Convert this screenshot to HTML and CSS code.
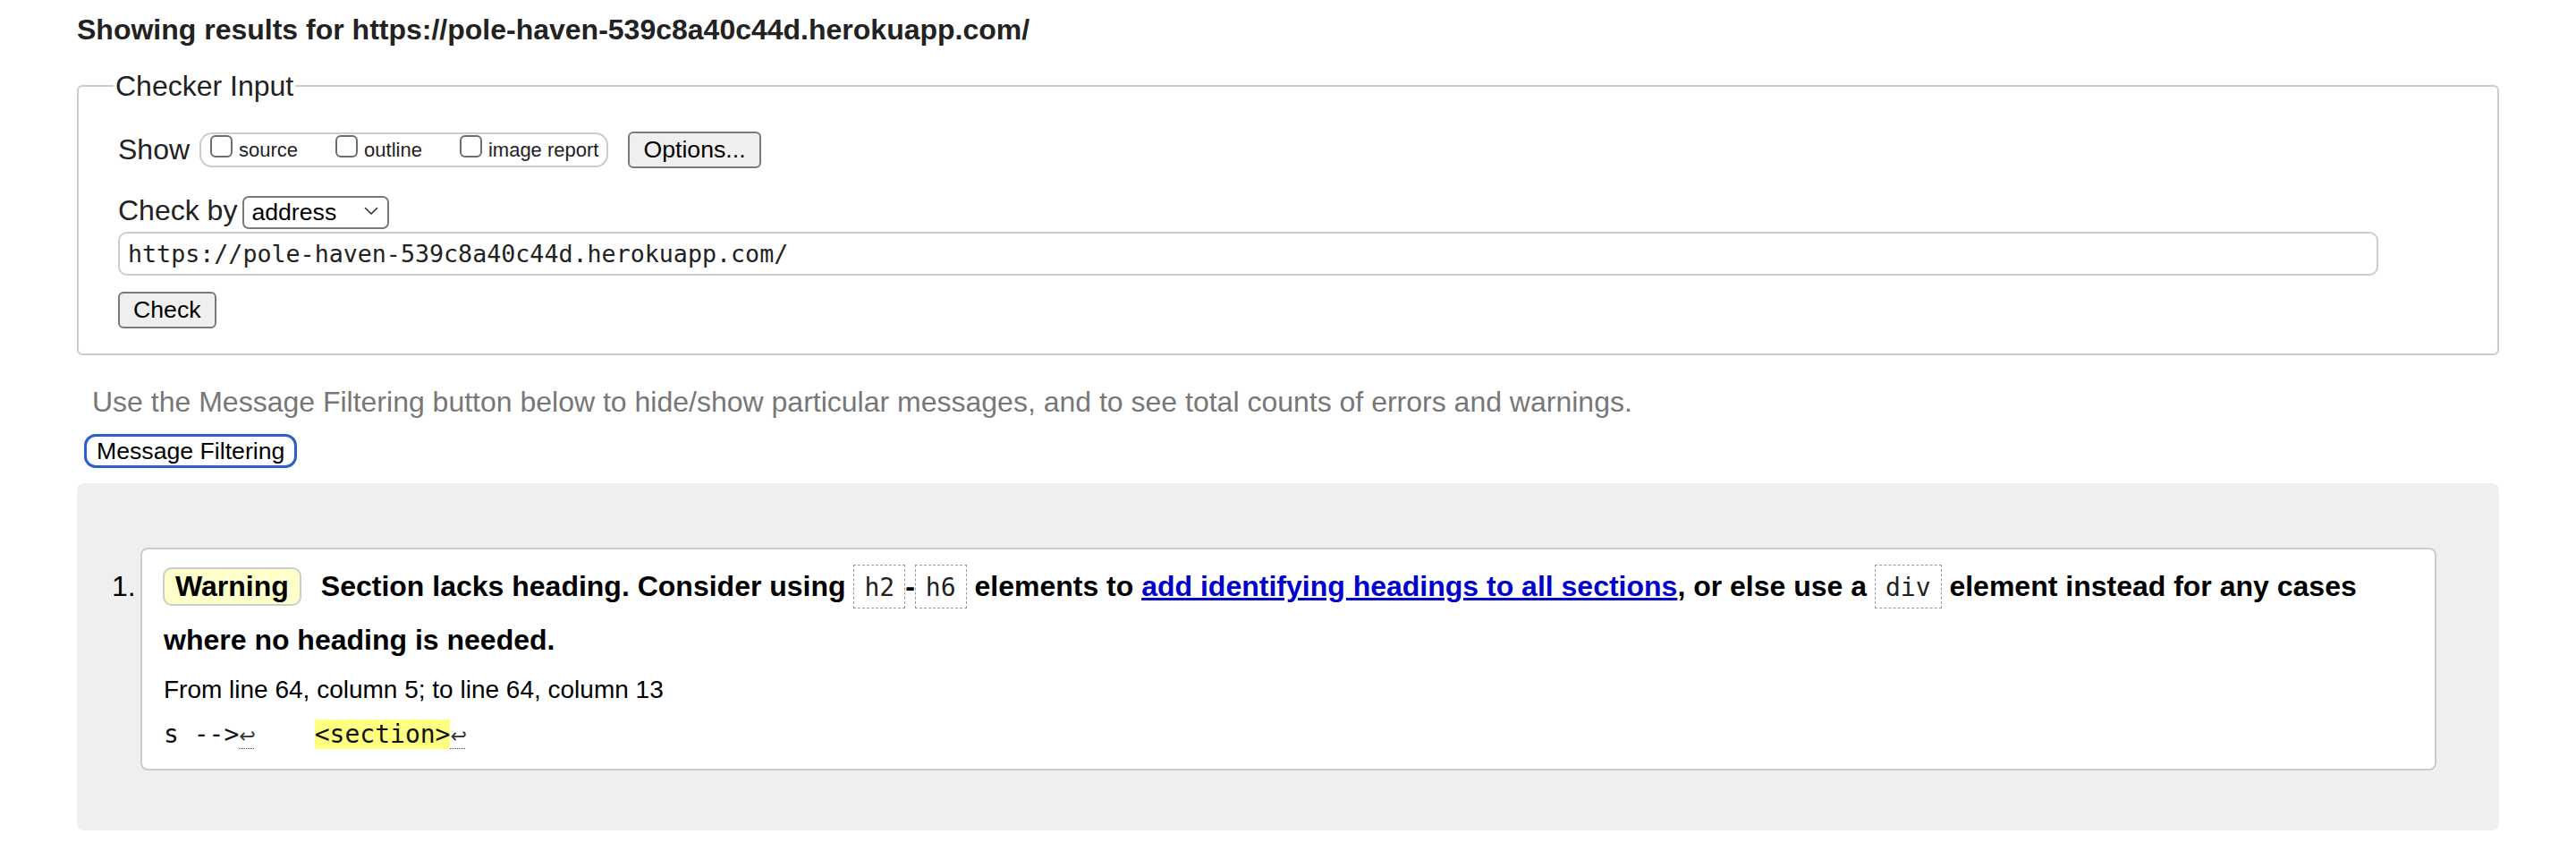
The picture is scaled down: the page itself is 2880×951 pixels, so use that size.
FILE: index.html
```html
<!DOCTYPE html>
<html lang="en">
<head>
<meta charset="utf-8">
<title>Showing results for https://pole-haven-539c8a40c44d.herokuapp.com/ - Nu Html Checker</title>
<link rel="stylesheet" href="styles.css">
</head>
<body>
<h2 class="results-title">Showing results for https://pole-haven-539c8a40c44d.herokuapp.com/</h2>
<form class="checker">
  <fieldset class="checker-input">
    <legend>Checker Input</legend>
    <div class="row row-show">
      <span class="row-label">Show</span>
      <span class="show-group"><label class="opt"><input type="checkbox" class="cb">source</label><label class="opt"><input type="checkbox" class="cb">outline</label><label class="opt"><input type="checkbox" class="cb">image report</label></span>
      <button type="button" class="btn btn-options">Options...</button>
    </div>
    <div class="row row-by">
      <span class="row-label">Check by</span>
      <span class="select-wrap">
        <select class="select"><option>address</option></select>
        <svg class="chev" width="16" height="10" viewBox="0 0 16 10" aria-hidden="true"><path d="M1.5 1.5 L8 8 L14.5 1.5" fill="none" stroke="#333" stroke-width="1.6" stroke-linecap="round" stroke-linejoin="round"/></svg>
      </span>
    </div>
    <input class="url" type="url" value="https://pole-haven-539c8a40c44d.herokuapp.com/">
    <div class="row row-submit"><button type="button" class="btn">Check</button></div>
  </fieldset>
</form>
<p class="filter-note">Use the Message Filtering button below to hide/show particular messages, and to see total counts of errors and warnings.</p>
<button type="button" class="filter-btn">Message Filtering</button>
<div class="results">
  <ol class="messages">
    <li class="card">
      <p class="msg"><strong class="badge">Warning</strong><span class="msg-text">Section lacks heading. Consider using <code>h2</code>-<code>h6</code> elements to <a href="#">add identifying headings to all sections</a>, or else use a <code>div</code> element instead for any cases where no heading is needed.</span></p>
      <p class="location">From line 64, column 5; to line 64, column 13</p>
      <p class="extract"><code>s --&gt;<span class="lf">↩</span>    <mark>&lt;section&gt;</mark><span class="lf">↩</span></code></p>
    </li>
  </ol>
</div>
</body>
</html>
```
FILE: styles.css
```css
* { box-sizing: border-box; }

html { background: #fff; }

body {
  margin: 0;
  padding: 15px 86px 0;
  font-family: "Liberation Sans", Arial, Helvetica, sans-serif;
  font-size: 32px;
  color: #222;
}

.results-title {
  margin: 0 0 25px;
  font-size: 32px;
  line-height: 37px;
  font-weight: bold;
  color: #222;
}

.checker { margin: 0; }

.checker-input {
  margin: 0;
  padding: 32px 0 28px 44px;
  border: 2px solid #ccc;
  border-radius: 6px;
}

.checker-input legend {
  padding: 0 2px;
  margin-left: -5px;
  font-size: 32px;
  line-height: 38px;
}

.row { display: flex; align-items: center; }
.row-show { height: 41px; }
.row-by { height: 37px; margin-top: 29px; }
.row-submit { height: 41px; margin-top: 18px; }

.row-label { font-size: 32px; line-height: 37px; }

.show-group {
  display: inline-block;
  margin-left: 11px;
  height: 39px;
  padding: 1px 9px 0 10px;
  border: 2px solid #ccc;
  border-radius: 14px;
  font-size: 22px;
  line-height: 25px;
  white-space: nowrap;
}

.opt { margin-right: 42px; }
.opt:last-child { margin-right: 0; }

.cb {
  appearance: none;
  -webkit-appearance: none;
  display: inline-block;
  width: 25px;
  height: 25px;
  margin: 0 7px 0 0;
  border: 2px solid #6e6e6e;
  border-radius: 6px;
  background: #fff;
  vertical-align: -1px;
}

.btn {
  height: 41px;
  padding: 0 15px;
  border: 2px solid #7a7a7a;
  border-radius: 6px;
  background: #efefef;
  font-family: "Liberation Sans", Arial, sans-serif;
  font-size: 26.67px;
  color: #000;
}

.btn-options { margin-left: 22px; }

.select-wrap {
  position: relative;
  display: inline-block;
  margin-left: 6px;
  height: 37px;
}

.select {
  appearance: none;
  -webkit-appearance: none;
  width: 164px;
  height: 37px;
  padding: 0 0 0 8px;
  border: 2px solid #7a7a7a;
  border-radius: 7px;
  background: #fff;
  font-family: "Liberation Sans", Arial, sans-serif;
  font-size: 26.67px;
  color: #000;
}

.chev {
  position: absolute;
  right: 12px;
  top: 14px;
  pointer-events: none;
}

.url {
  display: block;
  margin-top: 5px;
  width: 95%;
  height: 49px;
  padding: 0 9px;
  border: 2px solid #ccc;
  border-radius: 10px;
  font-family: "DejaVu Sans Mono", "Liberation Mono", monospace;
  font-size: 26.67px;
  color: #222;
  background: #fff;
}

.filter-note {
  margin: 34px 0 17px 17px;
  font-size: 32px;
  line-height: 37px;
  color: #777;
}

.filter-btn {
  display: block;
  margin-left: 8px;
  height: 38px;
  padding: 0 11px;
  border: 3px solid #2a5fcc;
  border-radius: 13px;
  background: #fff;
  font-family: "Liberation Sans", Arial, sans-serif;
  font-size: 26.67px;
  color: #000;
}

.results {
  margin-top: 17px;
  padding: 72px 70px 67px 0;
  background: #efefef;
  border-radius: 8px;
}

.messages {
  margin: 0;
  padding-left: 71px;
  list-style: decimal outside;
  font-size: 32px;
  color: #000;
}

.card {
  padding: 12px 24px 18px;
  background: #fff;
  border: 2px solid #ccc;
  border-radius: 8px;
}

.card::marker {
  content: counter(list-item) ".\2006";
}

.msg {
  margin: 0;
  font-weight: bold;
  line-height: 58px;
  color: #000;
}

.badge {
  margin: 0 22px 0 -1px;
  padding: 1px 12px 2px;
  border: 2px solid #ccc;
  border-radius: 10px;
  background: #ffffcc;
}

.msg code {
  padding: 8px 11px 6px;
  border: 1px dashed #999;
  font-family: "DejaVu Sans Mono", "Liberation Mono", monospace;
  font-size: 28px;
  font-weight: normal;
  color: #222;
}

.msg a { color: #0000cc; text-decoration: underline; }

.location {
  margin: 7px 0 0;
  font-size: 28px;
  line-height: 40px;
}

.extract {
  margin: 10px 0 0;
  font-size: 28px;
  line-height: 40px;
  white-space: pre;
}

.extract code {
  font-family: "DejaVu Sans Mono", "Liberation Mono", monospace;
  font-size: 28px;
  color: #111;
}

.extract mark {
  background: #ffff80;
  color: inherit;
}

.lf {
  display: inline-block;
  width: 17px;
  padding-bottom: 3px;
  border-bottom: 1px dotted #444;
  font-family: "DejaVu Sans", sans-serif;
  font-size: 22px;
  line-height: 20px;
  text-align: center;
  color: #333;
}
```
